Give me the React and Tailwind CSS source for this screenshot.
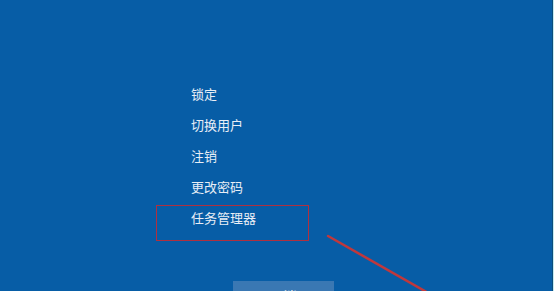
import React from 'react';

const items = ['锁定', '切换用户', '注销', '更改密码', '任务管理器'];

const App = () => {
  return (
    <div className="flex h-[291px] w-[554px] overflow-hidden" style={{ fontFamily: '"Noto Sans CJK SC", "Noto Sans", sans-serif' }}>
      <div className="relative flex-1 bg-[#075da6] overflow-hidden">
        <div className="flex flex-col pt-[78px] pl-[191px]">
          {items.map(item => (
            <div key={item} className="h-[31px] flex items-center text-[13px] text-[#e8eef6] leading-none">
              {item}
            </div>
          ))}
        </div>

        <button className="ml-[233px] mt-[48px] w-[101px] h-[28px] bg-[#3a78b3] text-white text-[13px] flex items-center justify-center leading-none">
          取消
        </button>

        {/* annotation box */}
        <div className="absolute left-[156px] top-[205px] w-[153px] h-[36px] border border-[#b0303f]" />

        {/* annotation arrow */}
        <svg className="absolute left-0 top-0" width="554" height="291" viewBox="0 0 554 291">
          <line x1="328" y1="236" x2="430" y2="294" stroke="#c0383c" strokeWidth="2.5" strokeLinecap="round" />
        </svg>
      </div>
      <div className="w-px bg-[#0b4d7c]" />
      <div className="w-px bg-[#c4eaf0]" />
    </div>
  );
};

export default App;
